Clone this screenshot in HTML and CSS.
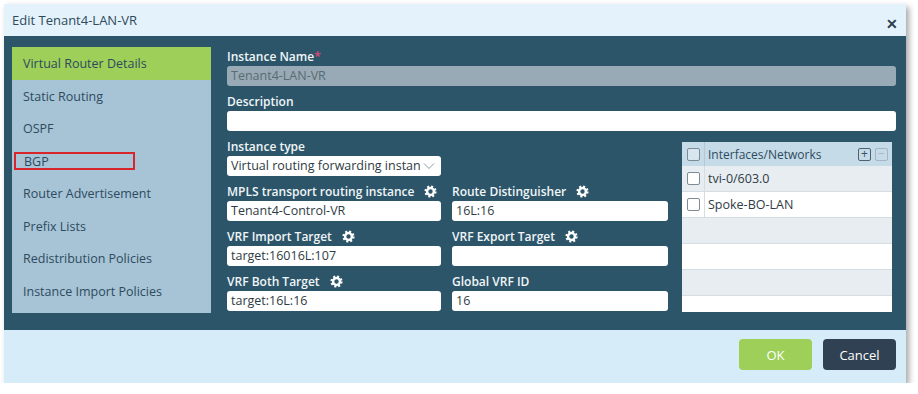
FILE: index.html
```html
<!DOCTYPE html>
<html>
<head>
	<title>Edit Tenant4-LAN-VR</title>
	<link rel="stylesheet" href="styles.css">
</head>
<body>
	<div class="dialog">
		<div class="dialog-title">
			<span>Edit Tenant4-LAN-VR</span>
			<span class="close">&#x2715;</span>
		</div>

		<div class="dialog-body">
			<ul class="side-nav">
				<li class="active">Virtual Router Details</li>
				<li>Static Routing</li>
				<li>OSPF</li>
				<li><span class="marked">BGP</span></li>
				<li>Router Advertisement</li>
				<li>Prefix Lists</li>
				<li>Redistribution Policies</li>
				<li>Instance Import Policies</li>
			</ul>

			<div class="form">
				<div class="field">
					<label>Instance Name<span class="req">*</span></label>
					<div class="input disabled">Tenant4-LAN-VR</div>
				</div>
				<div class="field">
					<label>Description</label>
					<div class="input"></div>
				</div>

				<div class="form-grid">
					<div class="field col1">
						<label>Instance type</label>
						<div class="input select">
							<span>Virtual routing forwarding instan</span>
							<svg class="chev" viewBox="0 0 12 8" width="12" height="8"><path d="M1 1.5 L6 6.5 L11 1.5" fill="none" stroke="#8a99a4" stroke-width="1"/></svg>
						</div>
					</div>
					<div class="field col1">
						<label>MPLS transport routing instance <svg class="gear" viewBox="0 0 16 16"><circle cx="8" cy="8" r="6" fill="none" stroke="#fff" stroke-width="3" stroke-dasharray="2.36 2.36"/><circle cx="8" cy="8" r="4.2" fill="none" stroke="#fff" stroke-width="3"/></svg></label>
						<div class="input">Tenant4-Control-VR</div>
					</div>
					<div class="field col2">
						<label>Route Distinguisher <svg class="gear" viewBox="0 0 16 16"><circle cx="8" cy="8" r="6" fill="none" stroke="#fff" stroke-width="3" stroke-dasharray="2.36 2.36"/><circle cx="8" cy="8" r="4.2" fill="none" stroke="#fff" stroke-width="3"/></svg></label>
						<div class="input">16L:16</div>
					</div>
					<div class="field col1">
						<label>VRF Import Target <svg class="gear" viewBox="0 0 16 16"><circle cx="8" cy="8" r="6" fill="none" stroke="#fff" stroke-width="3" stroke-dasharray="2.36 2.36"/><circle cx="8" cy="8" r="4.2" fill="none" stroke="#fff" stroke-width="3"/></svg></label>
						<div class="input">target:16016L:107</div>
					</div>
					<div class="field col2">
						<label>VRF Export Target <svg class="gear" viewBox="0 0 16 16"><circle cx="8" cy="8" r="6" fill="none" stroke="#fff" stroke-width="3" stroke-dasharray="2.36 2.36"/><circle cx="8" cy="8" r="4.2" fill="none" stroke="#fff" stroke-width="3"/></svg></label>
						<div class="input"></div>
					</div>
					<div class="field col1">
						<label>VRF Both Target <svg class="gear" viewBox="0 0 16 16"><circle cx="8" cy="8" r="6" fill="none" stroke="#fff" stroke-width="3" stroke-dasharray="2.36 2.36"/><circle cx="8" cy="8" r="4.2" fill="none" stroke="#fff" stroke-width="3"/></svg></label>
						<div class="input">target:16L:16</div>
					</div>
					<div class="field col2">
						<label>Global VRF ID</label>
						<div class="input">16</div>
					</div>

					<div class="net-table">
						<div class="net-head">
							<span class="cb-cell"><span class="cb"></span></span>
							<span class="net-title">Interfaces/Networks</span>
							<span class="tbtn">+</span>
							<span class="tbtn off">&minus;</span>
						</div>
						<div class="net-row grey"><span class="cb-cell"><span class="cb"></span></span><span class="net-name">tvi-0/603.0</span></div>
						<div class="net-row"><span class="cb-cell"><span class="cb"></span></span><span class="net-name">Spoke-BO-LAN</span></div>
						<div class="net-row grey empty"></div>
						<div class="net-row empty"></div>
						<div class="net-row grey empty"></div>
						<div class="net-row empty"></div>
					</div>
				</div>
			</div>
		</div>

		<div class="dialog-foot">
			<button class="btn ok">OK</button>
			<button class="btn cancel">Cancel</button>
		</div>
	</div>
</body>
</html>
```

FILE: styles.css
```css
body {
	margin: 0;
	background-color: #fff;
	font-family: "Open Sans", "Liberation Sans", sans-serif;
	font-size: 12px;
}
.dialog {
	margin: 4px 0 0 4px;
	width: 902px;
	height: 379px;
	display: flex;
	flex-direction: column;
	box-shadow: 3px 3px 6px rgba(0,0,0,0.35);
}
.dialog-title {
	height: 32px;
	background-color: #e4f2fb;
	color: #2e4a5c;
	font-size: 13px;
	display: flex;
	align-items: center;
	justify-content: space-between;
	padding: 0 8px 0 8px;
}
.close {
	font-weight: bold;
	font-size: 14px;
	color: #2b3d4a;
	margin-top: 6px;
}
.dialog-body {
	height: 294px;
	box-sizing: border-box;
	background-color: #2c5569;
	display: flex;
	padding: 10px 10px 0 8px;
}
.side-nav {
	list-style: none;
	margin: 1px 0 0 0;
	padding: 0;
	width: 199px;
	height: 266px;
	background-color: #a7c3d6;
	color: #2d4b5e;
	font-size: 12.5px;
}
.side-nav li {
	height: 32.5px;
	line-height: 33px;
	padding-left: 11px;
}
.side-nav li.active {
	background-color: #9dcf59;
}
.marked {
	display: inline-block;
	width: 121px;
	height: 18px;
	line-height: 16px;
	margin-left: -9px;
	padding-left: 8px;
	box-sizing: border-box;
	border: 2px solid #d8252c;
	vertical-align: middle;
	margin-top: -2px;
}
.form {
	flex: 1;
	margin-left: 16px;
	display: flex;
	flex-direction: column;
}
.field {
	margin-bottom: 5px;
}
.field label {
	display: flex;
	align-items: center;
	height: 20px;
	color: #f1f5f8;
	font-weight: 600;
}
.req {
	color: #e0457b;
}
.gear {
	width: 13px;
	height: 13px;
	margin-left: 10px;
}
.input {
	height: 20px;
	line-height: 20px;
	background-color: #fff;
	border-radius: 3px;
	padding-left: 4px;
	color: #2f3b44;
	font-size: 12.5px;
	white-space: nowrap;
	overflow: hidden;
}
.input.disabled {
	background-color: #98aab5;
	color: #5b6a74;
}
.select {
	display: flex;
	align-items: center;
}
.select span {
	width: 190px;
}
.chev {
	margin-left: 2px;
}
.form-grid {
	display: grid;
	grid-template-columns: 214px 216px 213px;
	column-gap: 11px;
}
.col1 {
	grid-column: 1;
}
.col2 {
	grid-column: 2;
}
.net-table {
	grid-column: 3;
	grid-row: 1 / span 4;
	margin: 6px 0 0 3px;
	height: 170px;
	background-color: #fff;
	overflow: hidden;
}
.net-head {
	height: 24px;
	background-color: #c6dbe8;
	display: flex;
	align-items: center;
	color: #2d4b5e;
}
.cb-cell {
	width: 22px;
	height: 100%;
	display: flex;
	align-items: center;
	justify-content: center;
	border-right: 1px solid #b7c6d0;
}
.cb {
	width: 11px;
	height: 11px;
	border: 1px solid #7d8b95;
	border-radius: 2px;
	background-color: #fff;
}
.net-head .cb {
	background-color: #d8e6ef;
}
.net-title {
	flex: 1;
	padding-left: 3px;
}
.tbtn {
	width: 11px;
	height: 11px;
	border: 1px solid #4c6272;
	border-radius: 2px;
	line-height: 10px;
	text-align: center;
	font-size: 12px;
	margin-right: 4px;
	color: #3d5262;
}
.tbtn.off {
	border-color: #a5b6c2;
	color: #a5b6c2;
}
.net-row {
	height: 26px;
	border-bottom: 1px solid #d5dde3;
	box-sizing: border-box;
	display: flex;
	align-items: center;
	color: #2f3b44;
	font-size: 12.5px;
}
.net-row.grey {
	background-color: #e8edf1;
}
.net-row .cb-cell {
	border-right-color: #d5dde3;
}
.net-name {
	padding-left: 3px;
}
.dialog-foot {
	flex: 1;
	background-color: #d6edf9;
	display: flex;
	justify-content: flex-end;
	align-items: center;
	gap: 11px;
	padding-right: 10px;
}
.btn {
	width: 73px;
	height: 31px;
	border: none;
	border-radius: 4px;
	font-family: "Open Sans", "Liberation Sans", sans-serif;
	font-size: 13px;
	color: #fff;
	margin-top: -4px;
}
.btn.ok {
	background-color: #9dcf59;
}
.btn.cancel {
	background-color: #2f4152;
}
```
